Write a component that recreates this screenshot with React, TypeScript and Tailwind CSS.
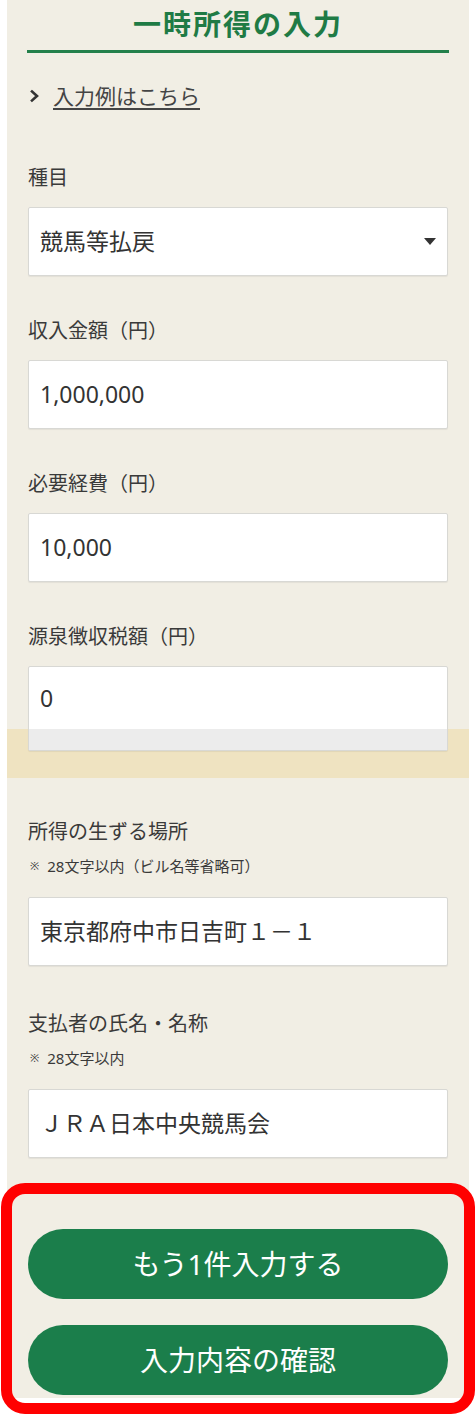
import React from "react";

const FONT = { fontFamily: '"Noto Sans", "Noto Sans CJK JP", sans-serif' };

function Field({
  label,
  note,
  value,
  select,
}: {
  label: string;
  note?: string;
  value: string;
  select?: boolean;
}) {
  return (
    <div className="flex flex-col">
      <div className="h-[28px] leading-[28px] text-[20px] text-[#3a3a3a]">{label}</div>
      {note && (
        <div className="mt-[10px] h-[20px] leading-[20px] text-[15px] text-[#3a3a3a] flex items-center">
          <span className="text-[11px] ml-[2px] mr-[8px]">※</span>
          <span>{note}</span>
        </div>
      )}
      <div
        className={`${note ? "mt-[21px]" : "mt-[15px]"} h-[69px] bg-white border border-[#d8d8d4] rounded-[2px] shadow-[0_1px_1px_rgba(0,0,0,0.06)] flex items-center pl-[11px] pr-[11px] text-[23px] text-[#333]`}
      >
        <span className="flex-1">{value}</span>
        {select && (
          <svg width="12" height="8" viewBox="0 0 12 8">
            <polygon points="0,0 12,0 6,7" fill="#333" />
          </svg>
        )}
      </div>
    </div>
  );
}

export default function App() {
  return (
    <div className="relative w-[476px] min-h-[1415px] bg-white" style={FONT}>
      <div className="ml-[7px] w-[462px] bg-[#f1eee4] px-[21px] pb-[3px]">
        {/* Title */}
        <div className="pt-[4px] h-[44px] leading-[40px] text-center text-[28px] font-bold tracking-[2px] text-[#1f7b45]">
          一時所得の入力
        </div>
        <div className="mt-[6px] -mx-[1px] h-[3px] bg-[#23804b]" />

        {/* Link */}
        <div className="mt-[29px] h-[28px] flex items-center text-[21px] text-[#444]">
          <svg width="10" height="14" viewBox="0 0 10 14" className="ml-[2px] mr-[13px]">
            <polyline
              points="2,2.5 7,7 2,11.5"
              fill="none"
              stroke="#333"
              strokeWidth="2.6"
              strokeLinecap="square"
            />
          </svg>
          <span className="underline underline-offset-[4px] decoration-[1.5px] leading-[28px]">
            入力例はこちら
          </span>
        </div>

        <div className="mt-[54px]">
          <Field label="種目" value="競馬等払戻" select />
        </div>
        <div className="mt-[41px]">
          <Field label="収入金額（円）" value="1,000,000" />
        </div>
        <div className="mt-[41px]">
          <Field label="必要経費（円）" value="10,000" />
        </div>

        {/* 源泉徴収税額 with overlay band */}
        <div className="mt-[41px] flex flex-col">
          <div className="h-[28px] leading-[28px] text-[20px] text-[#3a3a3a]">源泉徴収税額（円）</div>
          <div className="relative z-10 mt-[15px] h-[85px] bg-white border border-[#d8d8d4] rounded-[2px] shadow-[0_1px_1px_rgba(0,0,0,0.06)] flex flex-col text-[23px] text-[#333]">
            <div className="h-[62px] flex items-center pl-[11px]">0</div>
            <div className="flex-1 bg-[#ececec]" />
          </div>
          <div className="-mx-[21px] -mt-[22px] h-[49px] bg-[#efe3c1]" />
        </div>

        <div className="mt-[40px]">
          <Field
            label="所得の生ずる場所"
            note="28文字以内（ビル名等省略可）"
            value="東京都府中市日吉町１－１"
          />
        </div>
        <div className="mt-[44px]">
          <Field label="支払者の氏名・名称" note="28文字以内" value="ＪＲＡ日本中央競馬会" />
        </div>

        {/* Buttons */}
        <div className="mt-[71px] flex flex-col gap-[26px]">
          <button className="h-[70px] w-full rounded-full bg-[#1b7e4b] text-white text-[28px] leading-none">
            もう1件入力する
          </button>
          <button className="h-[70px] w-full rounded-full bg-[#1b7e4b] text-white text-[28px] leading-none">
            入力内容の確認
          </button>
        </div>
      </div>

      {/* Red highlight annotation */}
      <div className="absolute left-[1px] top-[1183px] w-[474px] h-[231px] border-[11px] border-[#ff0000] rounded-[24px] pointer-events-none" />
    </div>
  );
}
